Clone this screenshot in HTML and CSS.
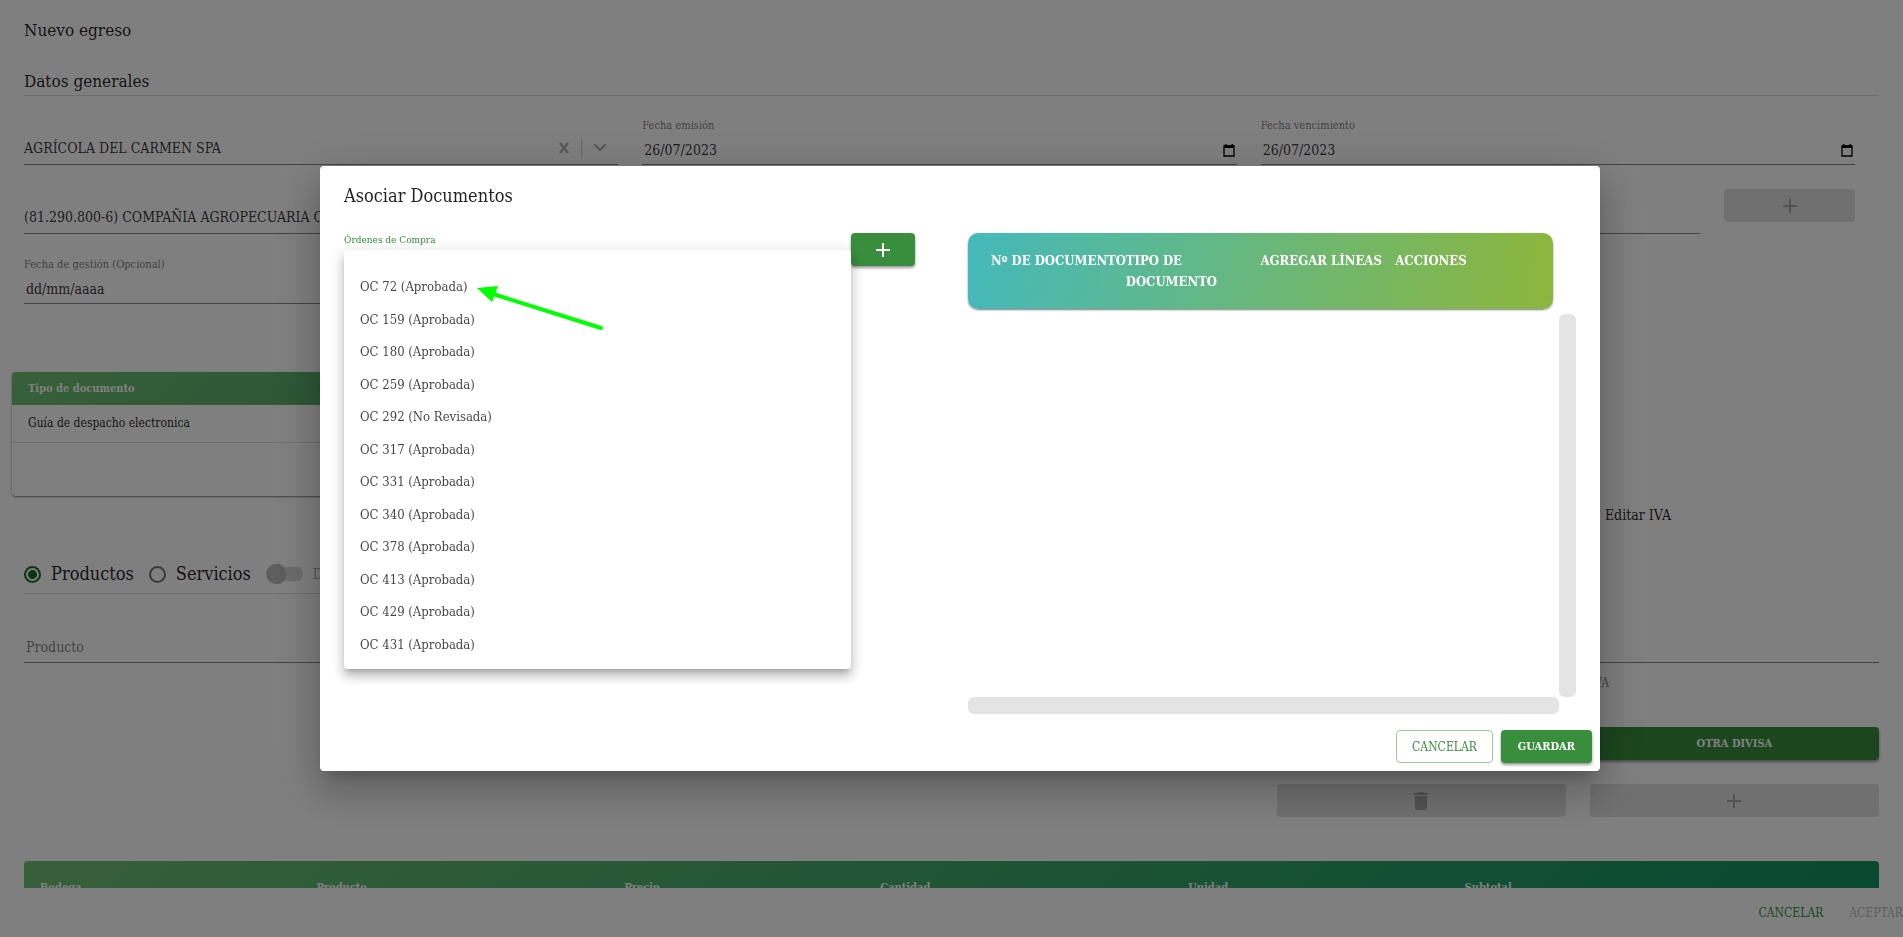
FILE: index.html
```
<!DOCTYPE html>
<html lang="es">
<head>
  <meta charset="UTF-8" />
  <meta name="viewport" content="width=device-width, initial-scale=1.0" />
  <title>Nuevo egreso</title>
  <link rel="stylesheet" href="styles.css">
</head>
<body>
  <main class="page">
    <h1 class="title">Nuevo egreso</h1>
    <h2 class="section-title">Datos generales</h2>

    <div class="row row-dates">
      <div class="field select-field">
        <input type="text" id="cliente" aria-label="Empresa" value="AGRÍCOLA DEL CARMEN SPA" />
        <button type="button" class="icon-btn" aria-label="Limpiar">
          <svg width="10" height="12" viewBox="0 0 10 12"><path d="M1 1l8 10M9 1L1 11" stroke="#b0b0b0" stroke-width="2.500" fill="none"/></svg>
        </button>
        <span class="divider"></span>
        <button type="button" class="icon-btn" aria-label="Abrir">
          <svg width="12" height="8" viewBox="0 0 12 8"><path d="M1 1l5 5 5-5" stroke="#b0b0b0" stroke-width="2" fill="none" stroke-linecap="round"/></svg>
        </button>
      </div>
      <div class="field">
        <label for="emision">Fecha emisión</label>
        <div class="date">
          <input type="text" id="emision" value="26/07/2023" />
          <svg width="12" height="13" viewBox="0 0 12 13"><path d="M1 2h10v10H1z" fill="none" stroke="#000" stroke-width="1.300"/><path d="M1 1.500h10V4H1zM2 0h1.500v2H2zM8.500 0H10v2H8.500z"/></svg>
        </div>
      </div>
      <div class="field">
        <label for="vencimiento">Fecha vencimiento</label>
        <div class="date">
          <input type="text" id="vencimiento" value="26/07/2023" />
          <svg width="12" height="13" viewBox="0 0 12 13"><path d="M1 2h10v10H1z" fill="none" stroke="#000" stroke-width="1.300"/><path d="M1 1.500h10V4H1zM2 0h1.500v2H2zM8.500 0H10v2H8.500z"/></svg>
        </div>
      </div>
    </div>

    <div class="row row-provider">
      <div class="field select-field">
        <input type="text" id="proveedor" aria-label="Proveedor" value="(81.290.800-6) COMPAÑIA AGROPECUARIA COPEVAL S.A." />
      </div>
      <button type="button" class="btn btn-disabled" aria-label="Agregar proveedor" disabled>
        <svg width="24" height="24" viewBox="0 0 24 24"><path d="M19 13h-6v6h-2v-6H5v-2h6V5h2v6h6v2z" fill="currentColor"/></svg>
      </button>
    </div>

    <div class="row row-dates row-management">
      <div class="field">
        <label for="gestion">Fecha de gestión (Opcional)</label>
        <div class="date">
          <input type="text" id="gestion" value="dd/mm/aaaa" />
        </div>
      </div>
    </div>

    <div class="card">
      <table class="docs">
        <thead>
          <tr><th>Tipo de documento</th></tr>
        </thead>
        <tbody>
          <tr><td>Guía de despacho electronica</td></tr>
        </tbody>
      </table>
    </div>

    <div class="iva">
      <input type="checkbox" id="editarIva" />
      <label for="editarIva">Editar IVA</label>
    </div>

    <div class="kinds">
      <input type="radio" id="productos" name="kind" checked />
      <label for="productos">Productos</label>
      <input type="radio" id="servicios" name="kind" />
      <label for="servicios">Servicios</label>
      <input type="checkbox" class="switch" id="descuento" disabled />
      <label class="muted" for="descuento">Descuento</label>
    </div>

    <div class="field product">
      <input type="text" id="producto" aria-label="Producto" placeholder="Producto" />
    </div>
    <p class="helper">Precio sin IVA</p>

    <div class="actions">
      <button type="button" class="btn btn-green divisa">OTRA DIVISA</button>
      <button type="button" class="btn btn-disabled trash" aria-label="Eliminar" disabled>
        <svg width="24" height="24" viewBox="0 0 24 24"><path d="M6 19c0 1.1.9 2 2 2h8c1.1 0 2-.9 2-2V7H6v12zM19 4h-3.500l-1-1h-5l-1 1H5v2h14V4z" fill="currentColor"/></svg>
      </button>
      <button type="button" class="btn btn-disabled" aria-label="Agregar producto" disabled>
        <svg width="24" height="24" viewBox="0 0 24 24"><path d="M19 13h-6v6h-2v-6H5v-2h6V5h2v6h6v2z" fill="currentColor"/></svg>
      </button>
    </div>

    <table class="lines">
      <thead>
        <tr>
          <th class="w-s">Bodega</th>
          <th class="w-l">Producto</th>
          <th class="w-xs">Precio</th>
          <th class="w-l">Cantidad</th>
          <th class="w-s">Unidad</th>
          <th>Subtotal</th>
        </tr>
      </thead>
    </table>
  </main>

  <footer class="footer">
    <button type="button" class="btn btn-text">CANCELAR</button>
    <button type="button" class="btn btn-text" disabled>ACEPTAR</button>
  </footer>

  <div class="backdrop">
    <div class="dialog" role="dialog" aria-labelledby="dialogTitle">
      <h2 class="dialog-title" id="dialogTitle">Asociar Documentos</h2>

      <div class="dialog-body">
        <div class="orders">
          <div class="orders-field">
            <label for="ordenes">Órdenes de Compra</label>
            <select id="ordenes"><option></option></select>
          </div>
          <button type="button" class="btn btn-green add" aria-label="Agregar orden">
            <svg width="24" height="24" viewBox="0 0 24 24"><path d="M19 13h-6v6h-2v-6H5v-2h6V5h2v6h6v2z" fill="currentColor"/></svg>
          </button>
        </div>

        <div class="linked">
          <table class="linked-head">
            <tr>
              <th>Nº DE DOCUMENTO</th>
              <th>TIPO DE DOCUMENTO</th>
              <th>AGREGAR LÍNEAS</th>
              <th>ACCIONES</th>
            </tr>
          </table>
          <div class="scroll-y"></div>
          <div class="scroll-x"></div>
        </div>
      </div>

      <div class="dialog-actions">
        <button type="button" class="btn btn-outline">CANCELAR</button>
        <button type="button" class="btn btn-green">GUARDAR</button>
      </div>

      <ul class="menu" role="listbox" aria-label="Órdenes de Compra">
        <li role="option">OC 72 (Aprobada)</li>
        <li role="option">OC 159 (Aprobada)</li>
        <li role="option">OC 180 (Aprobada)</li>
        <li role="option">OC 259 (Aprobada)</li>
        <li role="option">OC 292 (No Revisada)</li>
        <li role="option">OC 317 (Aprobada)</li>
        <li role="option">OC 331 (Aprobada)</li>
        <li role="option">OC 340 (Aprobada)</li>
        <li role="option">OC 378 (Aprobada)</li>
        <li role="option">OC 413 (Aprobada)</li>
        <li role="option">OC 429 (Aprobada)</li>
        <li role="option">OC 431 (Aprobada)</li>
      </ul>

      <svg class="arrow" width="130" height="50" viewBox="0 0 130 50">
        <path d="M16 8L124 42" stroke="#0f0" stroke-width="4" stroke-linecap="round"/>
        <path d="M0 2l21-2-6 16z" fill="#0f0"/>
      </svg>
    </div>
  </div>
</body>
</html>
```
FILE: styles.css
```
* {
  box-sizing: border-box;
}

body {
  margin: 0;
  height: 100vh;
  display: flex;
  flex-direction: column;
  overflow: hidden;
  background-color: #fff;
  color: rgba(0,0,0,0.87);
  font-family: 'Roboto Slab', 'DejaVu Serif Condensed', 'DejaVu Serif', serif;
  font-size: 14px;
  line-height: 20px;
}

h1, h2, p, ul {
  margin: 0;
  padding: 0;
}

button, input, select {
  font: inherit;
  color: inherit;
}

/* Form page */
.page {
  flex: 1;
  min-height: 0;
  overflow: hidden;
  padding: 16px 24px 0;
}

.title, .section-title, .dialog-title {
  font-size: 17px;
  font-weight: normal;
  line-height: 28px;
}

.section-title {
  margin-top: 23px;
  border-bottom: 1px solid #ddd;
}

.row {
  display: grid;
  margin-top: 22px;
}

.row-dates {
  grid-template-columns: repeat(3, 1fr);
  align-items: end;
}

.row-dates .field {
  margin-right: 24px;
}

.row-provider {
  grid-template-columns: 11fr 1fr;
  margin-top: 24px;
}

.row-provider .field, .row-provider .btn {
  margin-right: 24px;
}

.row-management {
  margin-top: 23px;
}

.field {
  border-bottom: 1px solid #888;
}

.field label, .orders label {
  display: block;
  font-size: 11px;
  line-height: 16px;
  color: rgba(0,0,0,0.54);
}

.field input {
  flex: 1;
  min-width: 0;
  width: 100%;
  border: none;
  padding: 0;
  background: none;
  outline: none;
  color: rgba(0,0,0,0.8);
}

.select-field {
  display: flex;
  align-items: center;
  height: 45px;
  padding-top: 12px;
}

.date {
  display: flex;
  align-items: center;
  height: 30px;
  padding: 2px 2px 0;
}

.icon-btn {
  border: none;
  background: none;
  padding: 8px 12px;
  line-height: 0;
}

.divider {
  width: 1px;
  height: 20px;
  background-color: #ccc;
}

.card {
  width: 50%;
  height: 124px;
  margin: 68px 0 0 -12px;
  border-radius: 4px;
  overflow: hidden;
  box-shadow: 0 1px 2px rgba(0,0,0,0.5);
}

table {
  width: 100%;
  border-collapse: collapse;
}

th {
  text-align: left;
}

.docs {
  font-size: 12px;
}

.docs th {
  height: 33px;
  padding: 0 16px;
  color: #fff;
  font-size: 11px;
  background-image: linear-gradient(135deg, #6fbf73, #2f8f60);
}

.docs td {
  height: 37px;
  padding: 0 16px;
  border-bottom: 1px solid #ddd;
}

.iva {
  display: flex;
  align-items: center;
  justify-content: flex-end;
  gap: 12px;
  margin-top: 9px;
  padding-right: 208px;
}

.iva input {
  margin: 0;
}

.kinds {
  display: flex;
  align-items: center;
  width: 50%;
  height: 39px;
  margin-top: 30px;
  border-bottom: 1px solid #ddd;
  font-size: 18px;
}

.kinds label {
  margin: 0 15px 0 10px;
}

.kinds .muted {
  font-size: 14px;
  color: rgba(0,0,0,0.38);
}

.kinds input {
  appearance: none;
  flex: none;
  margin: 0;
}

.kinds input[type=radio] {
  width: 17px;
  height: 17px;
  border: 2px solid #757575;
  border-radius: 50%;
}

.kinds input[type=radio]:checked {
  border-color: #1b6b20;
  background: radial-gradient(circle, #1b6b20 4px, transparent 5px);
}

.kinds .switch {
  width: 37px;
  height: 20px;
  background: radial-gradient(circle at 10px 10px, #bdbdbd 10px, transparent 11px), linear-gradient(#d8d8d8, #d8d8d8) 6px 3px / 31px 14px no-repeat;
  border-radius: 10px;
}

.product {
  display: flex;
  align-items: center;
  height: 45px;
  margin-top: 24px;
  padding: 14px 2px 0;
}

.product input::placeholder {
  color: rgba(0,0,0,0.5);
}

.helper {
  margin-top: 12px;
  padding-right: 270px;
  text-align: right;
  font-size: 12px;
  line-height: 16px;
  color: rgba(0,0,0,0.5);
}

.actions {
  display: grid;
  grid-template-columns: repeat(6, 1fr);
  gap: 24px;
  margin-top: 36px;
}

.divisa {
  grid-column: 6;
}

.trash {
  grid-column: 5;
}

.lines {
  margin-top: 44px;
  font-size: 11px;
  table-layout: fixed;
  border-radius: 4px;
  background-image: linear-gradient(135deg, #6fbf73, #0f9362);
}

.lines th {
  height: 54px;
  padding: 0 16px;
  color: #fff;
}

.w-xs {
  width: 13.8%;
}

.w-s {
  width: 14.9%;
}

.w-l {
  width: 16.6%;
}

/* Buttons */
.btn {
  display: inline-flex;
  align-items: center;
  justify-content: center;
  height: 33px;
  padding: 0 16px;
  border: none;
  border-radius: 4px;
  background: none;
  font-size: 12px;
}

.btn-green {
  padding: 0 17px;
  background-color: #388e3c;
  color: #fff;
  font-size: 11px;
  font-weight: bold;
  box-shadow: 0 2px 3px rgba(0,0,0,0.4);
}

.btn-disabled {
  background-color: #e0e0e0;
  color: #a6a6a6;
}

.btn-text {
  padding: 0 8px;
  color: #388e3c;
}

.btn-text:disabled {
  color: #bdbdbd;
}

.btn-outline {
  padding: 0 15px;
  border: 1px solid #9ccc9e;
  color: #388e3c;
}

.footer {
  display: flex;
  align-items: center;
  justify-content: flex-end;
  gap: 10px;
  width: calc(100% + 17px);
  height: 49px;
  padding-right: 9px;
}

.backdrop {
  position: fixed;
  top: 0;
  bottom: 0;
  left: 0;
  right: -17px;
  display: flex;
  align-items: center;
  justify-content: center;
  background-color: rgba(0,0,0,0.5);
}

/* Dialog */
.dialog {
  position: relative;
  width: 100%;
  max-width: 1280px;
  border-radius: 4px;
  background-color: #fff;
  box-shadow: 0 11px 15px -7px rgba(0,0,0,0.2), 0 24px 38px 3px rgba(0,0,0,0.14), 0 9px 46px 8px rgba(0,0,0,0.12);
}

.dialog-title {
  padding: 16px 24px 0;
  font-size: 18px;
}

.dialog-body {
  display: grid;
  grid-template-columns: 571px 1fr;
  gap: 53px;
  padding: 23px 24px 0;
}

.orders {
  display: flex;
  align-items: flex-start;
}

.orders-field {
  flex: 1;
}

.orders label {
  font-size: 10px;
  line-height: 14px;
  color: #388e3c;
}

.orders select {
  width: 100%;
  height: 30px;
  border: none;
  border-bottom: 2px solid #388e3c;
  background: none;
  appearance: none;
}

.add {
  width: 64px;
}

.linked {
  display: grid;
  grid-template-columns: 1fr 17px;
}

.linked-head {
  grid-column: 1;
  height: 76px;
  width: calc(100% - 6px);
  padding: 0 23px;
  table-layout: fixed;
  border-collapse: separate;
  border-spacing: 0;
  border-radius: 10px;
  background-image: linear-gradient(100deg, #45b9bb, #8db63c);
  box-shadow: 0 1px 2px rgba(0,0,0,0.5);
  font-size: 13px;
}

.linked-head th {
  padding: 17px 0 0;
  vertical-align: top;
  line-height: 21px;
  color: #fff;
}

.linked-head th:first-child {
  white-space: nowrap;
}

.scroll-y {
  grid-column: 2;
  grid-row: 2;
  height: 383px;
  margin-top: 5px;
  border-radius: 6px;
  background-color: #e4e4e4;
}

.scroll-x {
  grid-row: 3;
  height: 17px;
  border-radius: 6px;
  background-color: #e4e4e4;
}

.dialog-actions {
  display: flex;
  justify-content: flex-end;
  gap: 8px;
  padding: 16px 8px 8px;
}

.menu {
  position: absolute;
  top: 84px;
  bottom: 102px;
  left: 24px;
  width: 507px;
  padding: 21px 0 8px;
  display: flex;
  flex-direction: column;
  list-style: none;
  border-radius: 4px;
  background-color: #fff;
  box-shadow: 0 5px 5px -3px rgba(0,0,0,0.2), 0 8px 10px 1px rgba(0,0,0,0.14), 0 3px 14px 2px rgba(0,0,0,0.12);
}

.menu li {
  flex: 1;
  display: flex;
  align-items: center;
  padding: 0 16px;
  font-size: 13px;
  color: rgba(0,0,0,0.75);
}

/* Arrow pointing at the first order */
.arrow {
  position: absolute;
  top: 120px;
  left: 157px;
}
```
